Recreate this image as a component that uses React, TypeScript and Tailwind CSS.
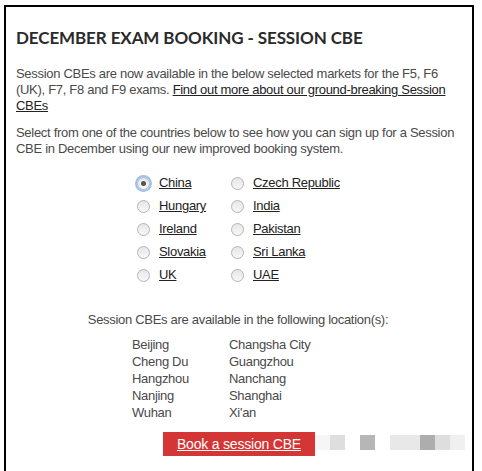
export default function App() {
  const countries = [
    ['China', 'Czech Republic'],
    ['Hungary', 'India'],
    ['Ireland', 'Pakistan'],
    ['Slovakia', 'Sri Lanka'],
    ['UK', 'UAE'],
  ];

  const locations = [
    ['Beijing', 'Changsha City'],
    ['Cheng Du', 'Guangzhou'],
    ['Hangzhou', 'Nanchang'],
    ['Nanjing', 'Shanghai'],
    ['Wuhan', "Xi'an"],
  ];

  const Radio = ({ checked }: { checked?: boolean }) => (
    <span
      className={`flex items-center justify-center w-[13px] h-[13px] rounded-full border border-[#b4b4b4] bg-gradient-to-b from-[#e6e6e6] to-[#f8f8f8] ${
        checked ? 'ring-2 ring-[#9ec0f5]' : ''
      }`}
    >
      {checked && <span className="w-[5px] h-[5px] rounded-full bg-[#555]" />}
    </span>
  );

  return (
    <div className="relative w-[482px] h-[471px] overflow-hidden bg-white pt-[5px] pl-[4px]">
      <div className="w-[470px] h-[480px] border-2 border-b-0 border-black px-[10px] pt-[19px] font-['Liberation_Sans',Arial,sans-serif] text-[13px] leading-[16px] tracking-[-0.3px] text-[#4a4a4a]">
        <h1 className="font-['Lato',sans-serif] font-bold text-[17px] leading-[24px] text-[#2a2a2a] tracking-[-0.1px]">
          DECEMBER EXAM BOOKING - SESSION CBE
        </h1>

        <p className="mt-[16px] pr-[4px]">
          Session CBEs are now available in the below selected markets for the F5, F6 (UK), F7, F8 and F9 exams.{' '}
          <a className="underline text-[#222]">Find out more about our ground-breaking Session CBEs</a>
        </p>

        <p className="mt-[11px] pr-[4px]">
          Select from one of the countries below to see how you can sign up for a Session CBE in December using our new improved booking system.
        </p>

        <div className="mt-[18px] ml-[121px] flex flex-col gap-[7px]">
          {countries.map((row, i) => (
            <div key={i} className="flex h-[16px] items-center">
              {row.map((c, j) => (
                <label key={c} className={`flex items-center gap-[9px] ${j === 0 ? 'w-[94px]' : ''}`}>
                  <Radio checked={i === 0 && j === 0} />
                  <span className="underline text-[#222]">{c}</span>
                </label>
              ))}
            </div>
          ))}
        </div>

        <p className="mt-[29px] text-center pr-[2px]">
          Session CBEs are available in the following location(s):
        </p>

        <div className="mt-[8px] ml-[116px] flex flex-col leading-[17px]">
          {locations.map(([a, b]) => (
            <div key={a} className="flex">
              <span className="w-[97px]">{a}</span>
              <span>{b}</span>
            </div>
          ))}
        </div>

        <div className="mt-[11px] ml-[147px] w-[152px] h-[24px] bg-[#d43535] flex items-center justify-center">
          <a className="underline text-white text-[14px] tracking-[-0.2px]">Book a session CBE</a>
        </div>
      </div>

      <div className="absolute left-[315px] top-[435px] flex h-[15px]">
        <span className="w-[15px] bg-[#f6f6f6]" />
        <span className="w-[15px] bg-[#dedede]" />
        <span className="w-[15px] bg-white" />
        <span className="w-[15px] bg-[#b6b6b6]" />
        <span className="w-[15px] bg-white" />
        <span className="w-[30px] bg-[#e8e8e8]" />
        <span className="w-[15px] bg-[#adadad]" />
        <span className="w-[15px] bg-[#dedede]" />
        <span className="w-[15px] bg-[#f0f0f0]" />
      </div>
    </div>
  );
}
